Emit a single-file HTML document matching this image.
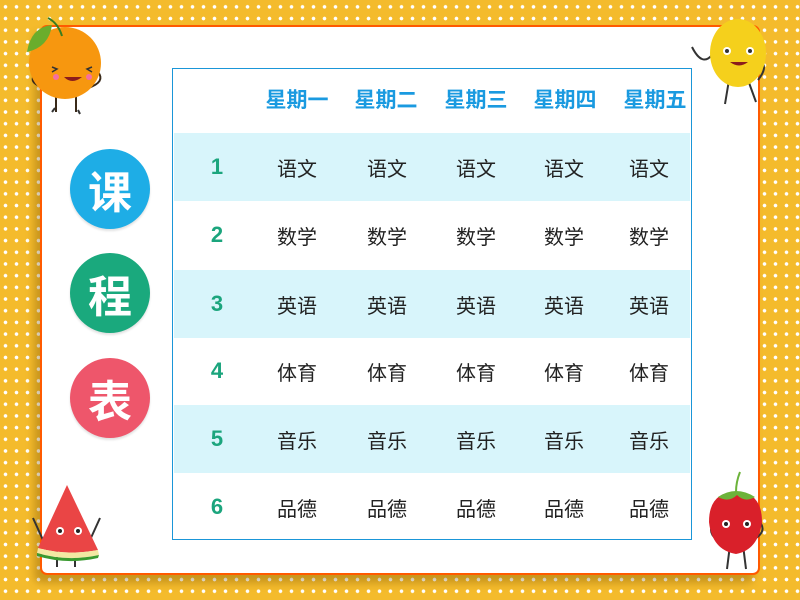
<!DOCTYPE html>
<html><head><meta charset="utf-8"><style>
body{margin:0;width:800px;height:600px;overflow:hidden;position:relative;
background-color:#f4bb2c;
background-image:radial-gradient(circle,#fff 1.6px,transparent 2px);
background-size:11px 11.7px;background-position:0 1px;
font-family:"Liberation Sans","Noto Sans CJK SC",sans-serif;}
.card{position:absolute;left:40px;top:25px;width:716px;height:546px;background:#fff;border:2px solid #ff5a00;border-radius:7px;box-shadow:-6px 8px 8px rgba(120,80,0,.35);}
.tbl{position:absolute;left:172px;top:68px;width:520px;height:472px;border:1px solid #1a96d8;box-sizing:border-box;}
.row{position:absolute;left:1px;right:1px;height:68px}
.c{position:absolute;top:0;height:100%;display:flex;align-items:center;justify-content:center;width:80px;font-size:20px;color:#222;}
.h .c{color:#1a9ae0;font-weight:bold;font-size:21px;height:60px}
.n{color:#1ba57d!important;font-weight:bold;font-size:22px!important}
.circ{position:absolute;left:70px;width:80px;height:80px;border-radius:50%;color:#fff;font-weight:bold;font-size:44px;display:flex;align-items:center;justify-content:center;box-shadow:0 2px 2px rgba(0,0,0,.12)}
</style></head><body>
<div class="card"></div>
<div class="circ" style="top:149px;background:#1eade6">课</div>
<div class="circ" style="top:253px;background:#1aa97d">程</div>
<div class="circ" style="top:358px;background:#ee566b">表</div>
<div class="tbl">
<div class="row h" style="top:0;height:64px"><div class="c" style="left:83px">星期一</div><div class="c" style="left:172px">星期二</div><div class="c" style="left:262px">星期三</div><div class="c" style="left:351px">星期四</div><div class="c" style="left:441px">星期五</div></div>
<div class="row" style="top:64px;background:#d8f5fb"><div class="c n" style="left:3px">1</div><div class="c" style="left:83px">语文</div><div class="c" style="left:173px">语文</div><div class="c" style="left:262px">语文</div><div class="c" style="left:350px">语文</div><div class="c" style="left:435px">语文</div></div>
<div class="row" style="top:132px"><div class="c n" style="left:3px">2</div><div class="c" style="left:83px">数学</div><div class="c" style="left:173px">数学</div><div class="c" style="left:262px">数学</div><div class="c" style="left:350px">数学</div><div class="c" style="left:435px">数学</div></div>
<div class="row" style="top:201px;background:#d8f5fb"><div class="c n" style="left:3px">3</div><div class="c" style="left:83px">英语</div><div class="c" style="left:173px">英语</div><div class="c" style="left:262px">英语</div><div class="c" style="left:350px">英语</div><div class="c" style="left:435px">英语</div></div>
<div class="row" style="top:268px"><div class="c n" style="left:3px">4</div><div class="c" style="left:83px">体育</div><div class="c" style="left:173px">体育</div><div class="c" style="left:262px">体育</div><div class="c" style="left:350px">体育</div><div class="c" style="left:435px">体育</div></div>
<div class="row" style="top:336px;background:#d8f5fb"><div class="c n" style="left:3px">5</div><div class="c" style="left:83px">音乐</div><div class="c" style="left:173px">音乐</div><div class="c" style="left:262px">音乐</div><div class="c" style="left:350px">音乐</div><div class="c" style="left:435px">音乐</div></div>
<div class="row" style="top:404px"><div class="c n" style="left:3px">6</div><div class="c" style="left:83px">品德</div><div class="c" style="left:173px">品德</div><div class="c" style="left:262px">品德</div><div class="c" style="left:350px">品德</div><div class="c" style="left:435px">品德</div></div>
</div>
<svg width="800" height="600" style="position:absolute;left:0;top:0">
<path d="M55 108 l-3 4 M78 110 l2 4" stroke="#333" stroke-width="2"/>
<path d="M56 95 v17 M76 95 v17" stroke="#3a2a1a" stroke-width="2"/>
<path d="M35 74 q-8 10 12 14 M98 72 q8 10 -10 16" stroke="#3a2a1a" stroke-width="2" fill="none"/>
<circle cx="65" cy="63" r="36" fill="#f7970f"/>
<path d="M27 52 q4 -25 25 -27 q-3 22 -25 27z" fill="#6aad2c"/>
<path d="M48 18 q10 5 14 18" stroke="#3a7d20" stroke-width="2" fill="none"/>
<path d="M64 77 q8 8 18 0 z" fill="#8b1c1c"/>
<circle cx="56" cy="77" r="3" fill="#f56fa0"/><circle cx="89" cy="77" r="3" fill="#f56fa0"/>
<path d="M52 67 l5 2 -5 3 M92 67 l-5 2 5 3" stroke="#333" stroke-width="1.5" fill="none"/>
<path d="M729 80 l-4 24 M748 80 l8 22" stroke="#333" stroke-width="2"/>
<path d="M712 55 q-10 12 -20 -8 M758 60 q12 5 0 20" stroke="#333" stroke-width="2" fill="none"/>
<ellipse cx="738" cy="53" rx="28" ry="34" fill="#f5d01c"/>
<circle cx="727" cy="51" r="4" fill="#fff"/><circle cx="750" cy="51" r="4" fill="#fff"/>
<circle cx="727" cy="51" r="2" fill="#333"/><circle cx="750" cy="51" r="2" fill="#333"/>
<path d="M730 62 q9 7 18 0z" fill="#8b1c1c"/>
<path d="M57 545 v22 M75 545 v22 M43 540 l-10 -22 M90 540 l10 -22" stroke="#333" stroke-width="2"/>
<path d="M67 485 L38 548 Q67 556 98 550 Z" fill="#ea4545"/>
<path d="M38 548 Q67 556 98 550 L99 555 Q67 562 37 553Z" fill="#f3e9a3"/>
<path d="M37 553 Q67 562 99 555 L98 558 Q67 565 37 556Z" fill="#3a9a30"/>
<circle cx="60" cy="531" r="4" fill="#fff"/><circle cx="78" cy="531" r="4" fill="#fff"/>
<circle cx="60" cy="531" r="2" fill="#222"/><circle cx="78" cy="531" r="2" fill="#222"/>
<path d="M730 545 l-3 24 M743 545 l3 24 M717 520 q-12 10 0 20 M758 520 q10 10 -2 18" stroke="#333" stroke-width="2" fill="none"/>
<path d="M736 492 q26 0 26 30 q-4 28 -26 32 q-24 -4 -27 -32 q0 -30 27 -30z" fill="#d9202a"/>
<path d="M718 497 q18 -12 37 0 q-10 6 -18 -2 q-8 8 -19 2z" fill="#6cb33a"/>
<path d="M736 492 q0 -10 4 -20" stroke="#6cb33a" stroke-width="2" fill="none"/>
<circle cx="726" cy="524" r="4" fill="#fff"/><circle cx="747" cy="524" r="4" fill="#fff"/>
<circle cx="726" cy="524" r="2" fill="#222"/><circle cx="747" cy="524" r="2" fill="#222"/>
</svg>
</body></html>
